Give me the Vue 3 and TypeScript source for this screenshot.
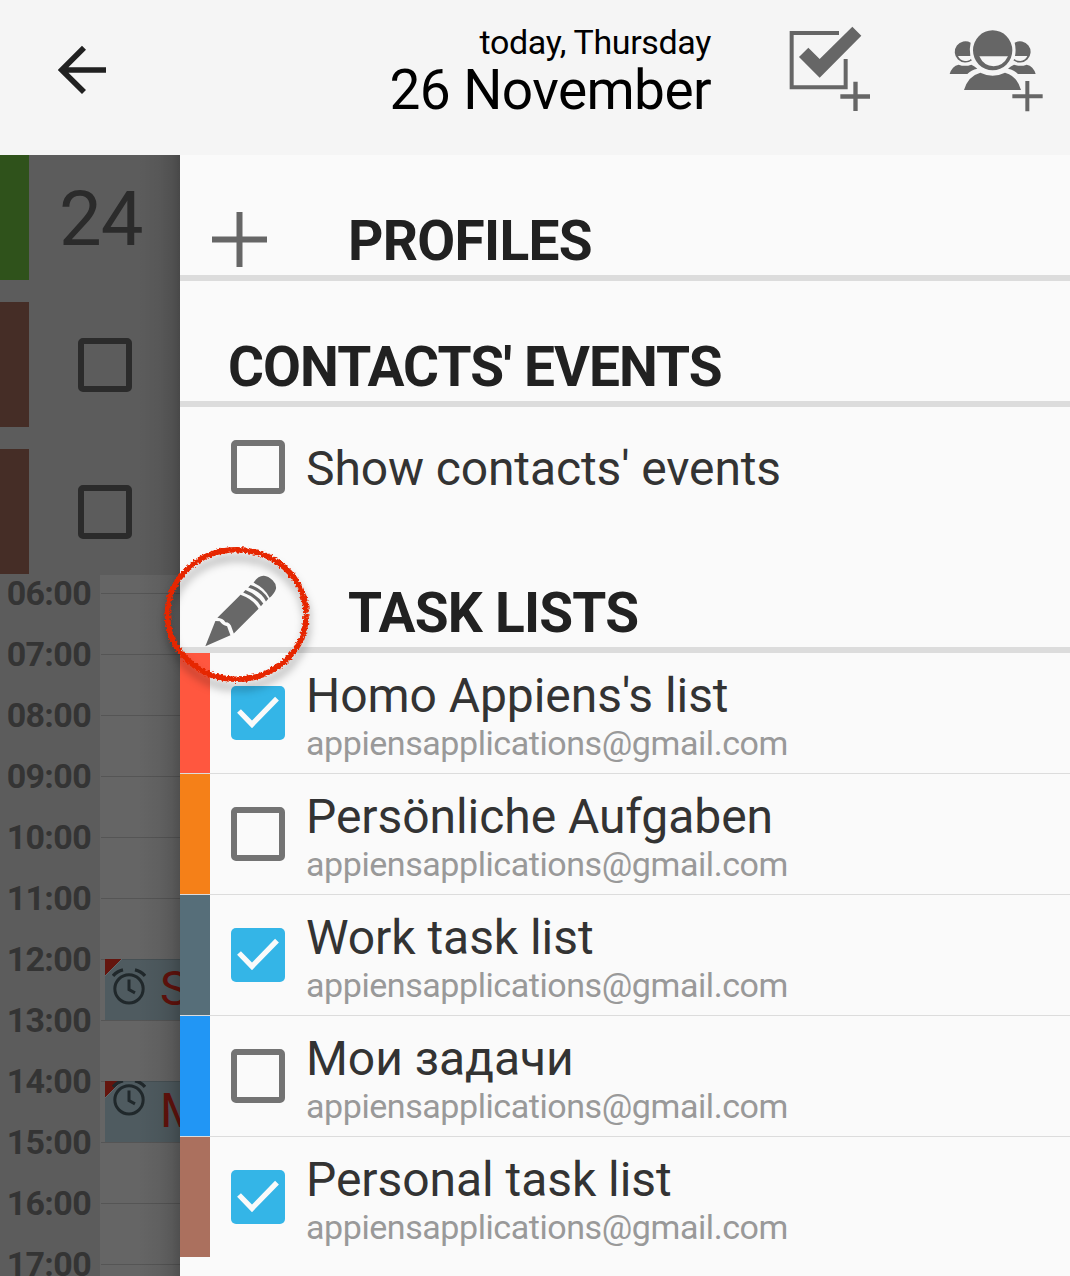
<script setup lang="ts">
interface TaskList {
  name: string
  account: string
  color: string
  checked: boolean
}

const account = 'appiensapplications@gmail.com'

const taskLists: TaskList[] = [
  { name: "Homo Appiens's list", account, color: '#ff573f', checked: true },
  { name: 'Persönliche Aufgaben', account, color: '#f58018', checked: false },
  { name: 'Work task list', account, color: '#566e79', checked: true },
  { name: 'Мои задачи', account, color: '#2196f5', checked: false },
  { name: 'Personal task list', account, color: '#ab705e', checked: true },
]

const hours: string[] = Array.from({ length: 12 }, (_, i) => `${String(i + 6).padStart(2, '0')}:00`)

const events: Record<string, { title: string; short: boolean }> = {
  '12:00': { title: 'S', short: false },
  '14:00': { title: 'M', short: true },
}
</script>

<template>
  <div class="screen">
    <header class="topbar">
      <svg class="back" viewBox="174 135 147 150" fill="none" stroke="#212121" stroke-width="17">
        <path d="M318 210H186M252 143L185 210L252 276" />
      </svg>
      <div class="date">
        <div class="weekday">today, Thursday</div>
        <div class="day">26 November</div>
      </div>
      <svg class="add-task" viewBox="57 45 246 261">
        <g fill="none" stroke="#666" stroke-width="12">
          <path d="M207 69H65V232H227V147" />
          <path d="M211 259.500H300M256.500 215V303" stroke-width="13" />
        </g>
        <path fill="#666" d="M87 141L115 113L149 147L247 50L274 77L149 203Z" />
      </svg>
      <svg class="add-people" viewBox="537 57 285 249">
        <g fill="#666">
          <path d="M602 98A32 32 0 1 0 606 151L602 147Q598 153 585 153Q570 152 564 138H601Q597 118 602 98Z" />
          <path d="M539 192Q546 168 566 164Q585 171 604 164Q614 168 622 176Q603 180 592 192Z" />
          <path transform="translate(1336 0) scale(-1 1)" d="M602 98A32 32 0 1 0 606 151L602 147Q598 153 585 153Q570 152 564 138H601Q597 118 602 98Z" />
          <path transform="translate(1336 0) scale(-1 1)" d="M539 192Q546 168 566 164Q585 171 604 164Q614 168 622 176Q603 180 592 192Z" />
          <path fill-rule="evenodd" d="M668 61A59 60 0 1 0 668 181A59 60 0 1 0 668 61ZM628 139H714Q700 168 671 169Q641 168 628 139Z" />
          <path d="M582 240Q594 198 631 188Q668 206 705 188Q742 198 753 240Z" />
        </g>
        <path fill="none" stroke="#666" stroke-width="12" d="M727 259H818M772 213V304" />
      </svg>
    </header>

    <div class="body">
      <aside class="calendar">
        <div class="allday first"><i class="tag green"></i><span class="daynum">24</span></div>
        <div class="allday"><i class="tag brown"></i><span class="box dark"></span></div>
        <div class="allday"><i class="tag brown"></i><span class="box dark"></span></div>
        <div class="timeline">
          <div v-for="h in hours" :key="h" class="hour">
            <span class="label">{{ h }}</span>
            <div class="slot">
              <div v-if="events[h]" class="event" :class="{ short: events[h].short }">
                <i class="corner"></i>
                <svg class="alarm" viewBox="0 0 102 110" fill="none" stroke="#20282b">
                  <circle cx="51" cy="62" r="42.500" stroke-width="9" />
                  <path stroke-width="9" d="M51 34V64L69 74" />
                  <path stroke-width="10" d="M3 23Q15 9 33 5M69 5Q87 9 99 23" />
                </svg>
                <span class="event-title">{{ events[h].title }}</span>
              </div>
            </div>
          </div>
        </div>
        <div class="drawer-shadow"></div>
      </aside>

      <main class="drawer">
        <h2 class="heading profiles">
          <svg class="plus" viewBox="0 0 55 55" stroke="#666" stroke-width="6"><path d="M0 27.500H55M27.500 0V55" /></svg>
          <span class="t-profiles">PROFILES</span>
        </h2>
        <h2 class="heading contacts"><span class="t-contacts">CONTACTS' EVENTS</span></h2>
        <label class="contact-row">
          <span class="box"></span>
          <span class="name">Show contacts' events</span>
        </label>
        <h2 class="heading tasks">
          <svg class="pencil" viewBox="164 135 215 215" fill="#686868">
            <path d="M309 158Q323 136 340 137Q353 138 366 151Q378 163 376 176Q372 190 357 203Q344 174 309 158Z" />
            <path d="M293 172L300 165Q334 175 353 206L346 214Q333 185 293 172Z" />
            <path d="M278 187L285 180Q320 194 338 220L331 228Q314 200 278 187Z" />
            <path d="M262 202L270 194Q309 208 324 236L315 245L250 310L244 293Q240 276 225 276Q217 264 201 263Z" />
            <path d="M195 272L208 273Q216 285 230 288Q235 303 240 315L165 348Z" />
          </svg>
          <span class="t-tasks">TASK LISTS</span>
        </h2>
        <ul class="lists">
          <li v-for="l in taskLists" :key="l.name" class="list">
            <i class="stripe" :style="{ background: l.color }"></i>
            <span class="box" :class="{ checked: l.checked }">
              <svg v-if="l.checked" viewBox="0 0 162 162" fill="none" stroke="#fafafa" stroke-width="16">
                <path d="M24 75L63 115L138 38" />
              </svg>
            </span>
            <div class="texts">
              <div class="name">{{ l.name }}</div>
              <div class="account">{{ l.account }}</div>
            </div>
          </li>
        </ul>
        <svg class="marker" viewBox="0 0 170 170">
          <defs>
            <filter id="chalk" x="-10%" y="-10%" width="120%" height="120%">
              <feTurbulence type="fractalNoise" baseFrequency="0.45" numOctaves="2" seed="4" result="n" />
              <feDisplacementMap in="SourceGraphic" in2="n" scale="5" xChannelSelector="R" yChannelSelector="G" />
            </filter>
          </defs>
          <ellipse cx="81.800" cy="84.500" rx="69.300" ry="64.800" fill="none" stroke="#e62600" stroke-width="5.600" filter="url(#chalk)" pathLength="360" stroke-dasharray="358.600 1.400" />
        </svg>
      </main>
    </div>
  </div>
</template>

<style>
body {
  margin: 0;
}
</style>

<style scoped>
.screen {
  width: 1070px;
  height: 1276px;
  overflow: hidden;
  background: #fafafa;
  font-family: Roboto, 'Liberation Sans', sans-serif;
}
svg {
  display: block;
  flex: none;
}
.topbar {
  display: flex;
  align-items: flex-start;
  height: 155px;
  background: #f5f5f5;
}
.back {
  width: 49px;
  height: 50px;
  margin: 45px 0 0 58px;
}
.date {
  width: 604px;
  padding-top: 22px;
  text-align: right;
  color: #000;
  white-space: nowrap;
}
.weekday {
  font-size: 34px;
  line-height: 40px;
  letter-spacing: -0.35px;
}
.day {
  font-size: 55px;
  line-height: 56px;
  letter-spacing: -0.6px;
}
.add-task {
  width: 82px;
  height: 87px;
  margin: 25px 0 0 78px;
}
.add-people {
  width: 95px;
  height: 83px;
  margin: 29px 0 0 78px;
}
.body {
  display: flex;
  height: 1121px;
}
.calendar {
  position: relative;
  width: 180px;
  height: 1121px;
  overflow: hidden;
  background: #5c5c5c;
}
.allday {
  display: flex;
  align-items: center;
  height: 125px;
  margin-top: 22px;
}
.allday.first {
  margin-top: 0;
}
.tag {
  width: 29px;
  height: 125px;
}
.green {
  background: #2f521b;
}
.brown {
  background: #452d26;
}
.daynum {
  margin: 3px 0 0 30px;
  font-size: 76px;
  line-height: 76px;
  letter-spacing: -1px;
  color: #2b2b2b;
}
.box {
  box-sizing: border-box;
  flex: none;
  width: 54px;
  height: 54px;
  border: 6px solid #737373;
  border-radius: 5px;
}
.box.dark {
  margin-left: 49px;
  border-color: #2b2b2b;
}
.box.checked {
  border: 0;
  background: #34b5e7;
}
.timeline {
  height: 702px;
}
.hour {
  display: flex;
  height: 61px;
}
.label {
  width: 91px;
  padding-right: 9px;
  text-align: right;
  font-size: 34px;
  font-weight: 700;
  line-height: 38px;
  letter-spacing: -0.65px;
  color: #343434;
}
.slot {
  width: 80px;
  height: 61px;
  background: linear-gradient(#555, #555) 1px 19px / 79px 1px no-repeat #656565;
}
.hour:first-child .slot {
  margin-top: 1px;
  height: 60px;
  background-position: 1px 18px;
}
.event {
  box-sizing: border-box;
  position: relative;
  display: flex;
  width: 75px;
  height: 61px;
  margin: 19px 0 0 5px;
  overflow: hidden;
  background: linear-gradient(#465054, #465054) 0 0 / 75px 1px no-repeat #4f5b60;
}
.corner {
  position: absolute;
  left: 0;
  top: 0;
  width: 17px;
  height: 17px;
  background: linear-gradient(135deg, #64150e 11.500px, #737b7d 11.500px, transparent 12.500px);
}
.alarm {
  position: relative;
  width: 34px;
  height: 37px;
  margin: 9px 0 0 7px;
}
.event-title {
  margin: 2px 0 0 14px;
  font-size: 48px;
  line-height: 56px;
  color: #64120c;
}
.short .alarm {
  margin-top: -2px;
}
.drawer-shadow {
  position: absolute;
  top: 0;
  right: 0;
  width: 42px;
  height: 1121px;
  background: linear-gradient(90deg, rgba(0, 0, 0, 0), rgba(0, 0, 0, 0.05) 50%, rgba(0, 0, 0, 0.12) 80%, rgba(0, 0, 0, 0.22));
}
.drawer {
  position: relative;
  width: 890px;
  background: #fafafa;
}
.heading {
  box-sizing: border-box;
  display: flex;
  align-items: flex-end;
  height: 126px;
  margin: 0;
  padding-bottom: 2px;
  border-bottom: 6px solid #dcdcdc;
  color: #212121;
  font-size: 55px;
  font-weight: 700;
  line-height: 64px;
  white-space: nowrap;
}
.contacts {
  padding-left: 48px;
}
.t-profiles {
  letter-spacing: -0.7px;
}
.t-contacts {
  letter-spacing: -0.9px;
}
.t-tasks {
  letter-spacing: -0.75px;
}
.plus {
  width: 55px;
  height: 55px;
  margin: 0 81px 6px 32px;
}
.pencil {
  width: 72px;
  height: 72px;
  margin: 0 71px -2px 25px;
}
.contact-row {
  display: flex;
  align-items: center;
  height: 120px;
  padding-left: 51px;
}
.name {
  font-size: 48px;
  line-height: 56px;
  letter-spacing: -0.06px;
  color: #333;
  white-space: nowrap;
}
.contact-row .name {
  margin: 4px 0 0 21px;
  letter-spacing: -0.12px;
}
.lists {
  margin: 0;
  padding: 0;
  list-style: none;
}
.list {
  display: flex;
  height: 120px;
  border-bottom: 1px solid #dcdcdc;
}
.list:last-child {
  border-bottom: 0;
}
.stripe {
  width: 30px;
  height: 120px;
}
.list .box {
  margin: 33px 21px 0 21px;
}
.texts {
  padding-top: 15px;
}
.account {
  margin-top: -1px;
  font-size: 34px;
  line-height: 40px;
  letter-spacing: -0.43px;
  color: #999;
}
.marker {
  position: absolute;
  left: -25px;
  top: 375px;
  width: 170px;
  height: 170px;
  filter: drop-shadow(1px 8px 4px rgba(0, 0, 0, 0.3));
}
</style>
